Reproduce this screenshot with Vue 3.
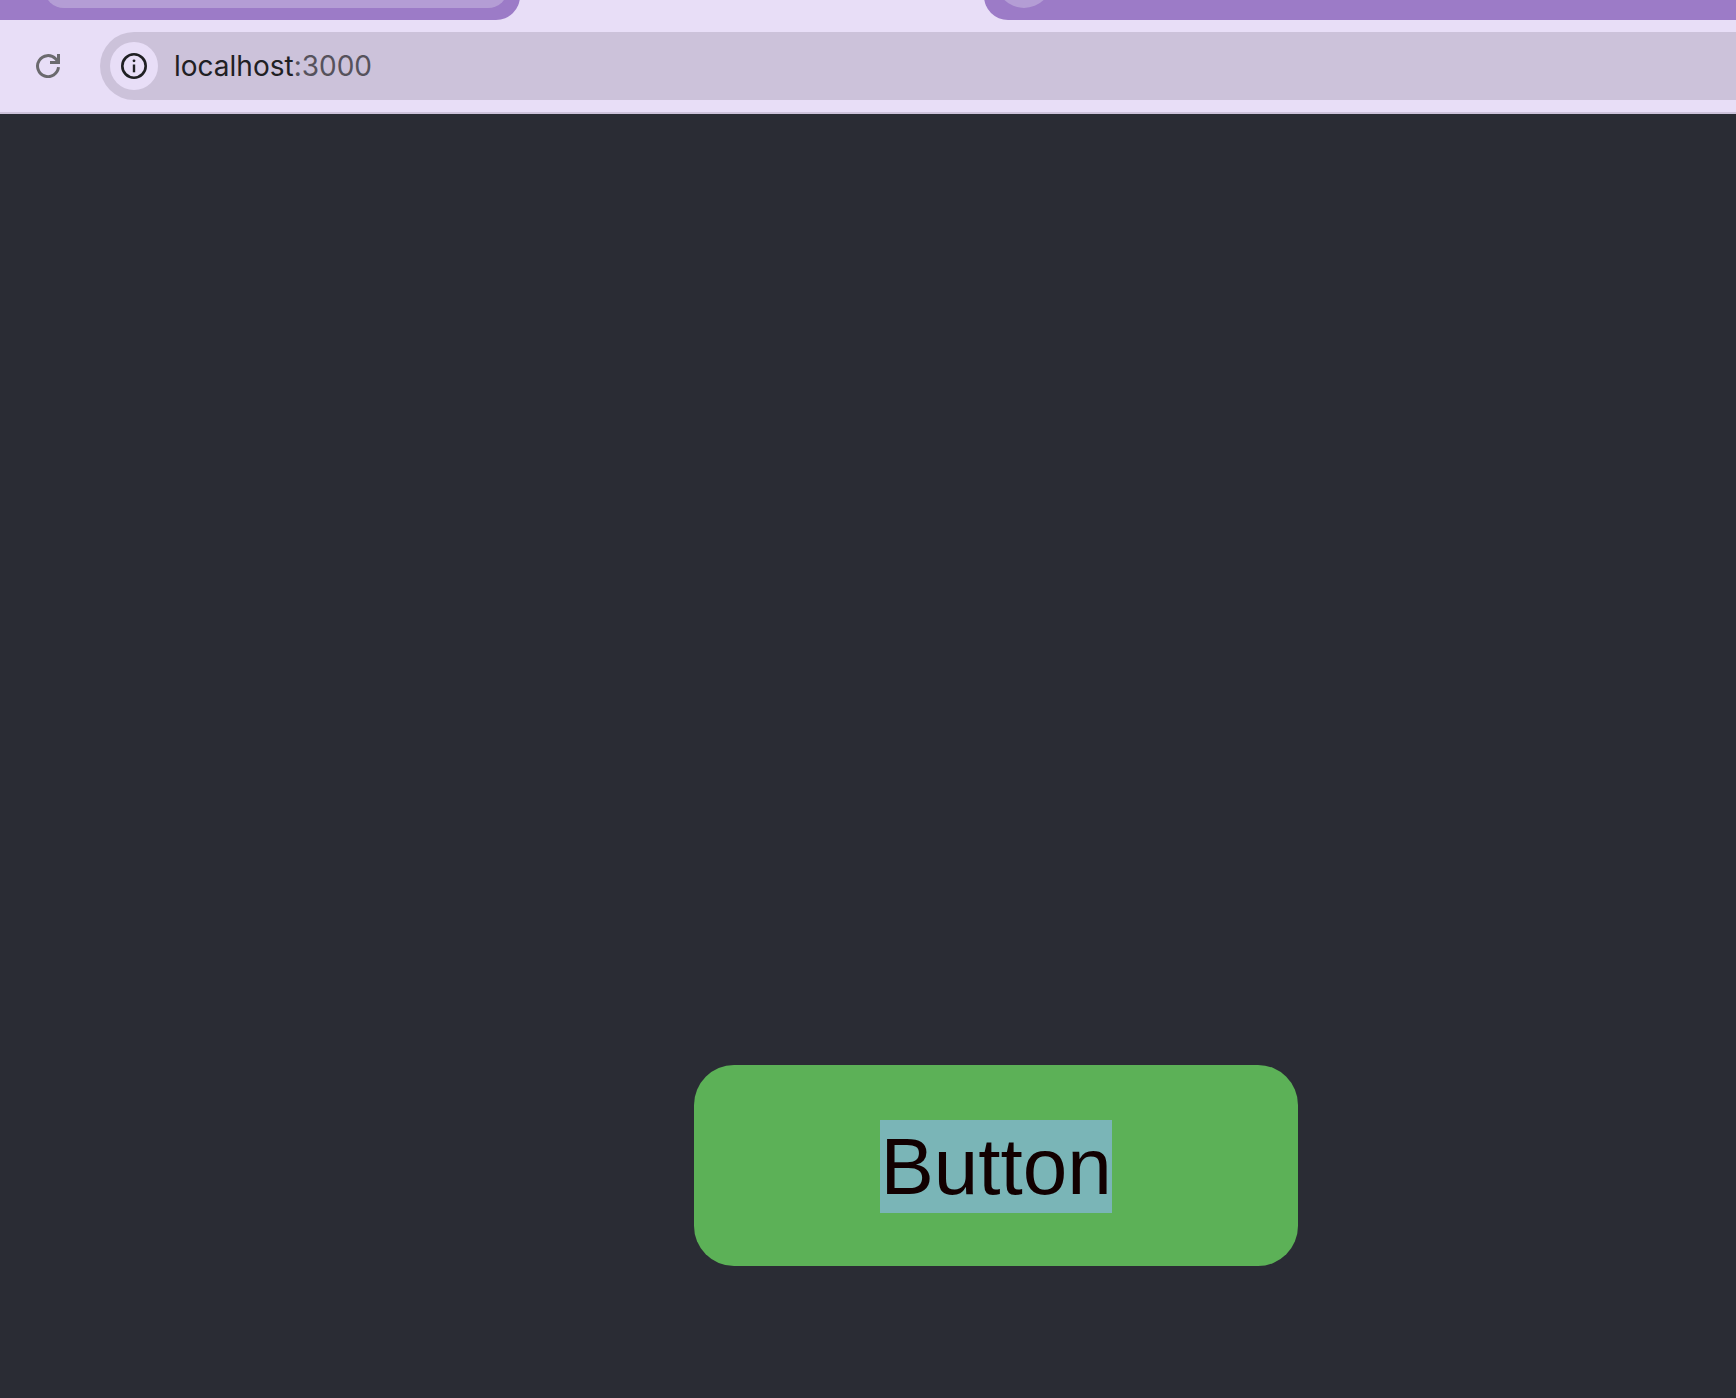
<script setup>
import { ref } from 'vue'

const host = ref('localhost')
const port = ref(':3000')
</script>

<template>
  <div class="browser">
    <header class="chrome">
      <div class="tab-strip">
        <div class="tabs-before"><span class="hovered-tab"></span></div>
        <div class="tabs-after"><span class="new-tab"></span></div>
      </div>
      <div class="toolbar">
        <button class="reload" type="button" aria-label="Reload">
          <svg width="24" height="24" viewBox="0 0 24 24" fill="none" stroke="#6b6a6e" stroke-width="3">
            <path d="M22.5 13.2A10.5 10.5 0 1 1 19.6 4.8L22.4 8" />
            <path d="M22.5 0V8.5H14" />
          </svg>
        </button>
        <div class="omnibox">
          <button class="site-info" type="button" aria-label="View site information">
            <svg width="26" height="26" viewBox="0 0 26 26" fill="none">
              <circle cx="13" cy="13" r="11.7" stroke="#1f2023" stroke-width="2.6" />
              <path d="M13 11.5V19.3" stroke="#1f2023" stroke-width="2.4" />
              <circle cx="13" cy="7.8" r="1.4" fill="#1f2023" />
            </svg>
          </button>
          <a class="address" href="#">{{ host }}<span class="port">{{ port }}</span></a>
        </div>
      </div>
    </header>
    <main class="page">
      <button class="action" type="button"><span class="selected">Button</span></button>
    </main>
  </div>
</template>

<style>
body {
  margin: 0;
  background: #2a2c34;
}
</style>

<style scoped>
.browser {
  display: flex;
  flex-direction: column;
  min-height: 100vh;
}

button {
  margin: 0;
  padding: 0;
  border: 0;
  background: none;
}

.chrome {
  background: #e8def7;
  border-bottom: 2px solid #ccc2da;
}

.tab-strip {
  display: flex;
  height: 20px;
  gap: 464px;
  overflow: hidden;
}

.tabs-before,
.tabs-after {
  box-sizing: border-box;
  display: flex;
  align-items: flex-end;
  align-self: flex-end;
  flex: none;
  height: 80px;
  padding-bottom: 12px;
  background: #9c7bc7;
}

.tabs-before {
  width: 520px;
  padding-left: 44px;
  padding-right: 12px;
  border-bottom-right-radius: 24px;
}

.tabs-after {
  flex: 1;
  padding-left: 12px;
  border-bottom-left-radius: 24px;
}

.hovered-tab {
  flex: 1;
  height: 56px;
  border-radius: 20px;
  background: #b49dd5;
}

.new-tab {
  width: 56px;
  height: 56px;
  border-radius: 50%;
  background: #b49dd5;
}

.toolbar {
  display: flex;
  align-items: center;
  gap: 28px;
  padding: 12px 0 12px 24px;
}

.reload {
  display: grid;
  place-items: center;
  width: 48px;
  height: 48px;
}

.omnibox {
  box-sizing: border-box;
  display: flex;
  flex: 1;
  align-items: center;
  gap: 16px;
  height: 68px;
  padding-left: 10px;
  border-radius: 34px 0 0 34px;
  background: #ccc2da;
}

.site-info {
  display: grid;
  place-items: center;
  width: 48px;
  height: 48px;
  border-radius: 50%;
  background: #e8def7;
}

.address {
  color: #1f2023;
  font: 28px/32px Inter, sans-serif;
  text-decoration: none;
}

.port {
  color: #56525c;
}

.page {
  flex: 1;
  padding: 951px 0 132px 40%;
}

.action {
  display: block;
  padding: 55px 186px 53px;
  border-radius: 40px;
  background: #5cb157;
  color: #120000;
  font: 80px/93px "Liberation Sans", Arial, sans-serif;
}

.selected {
  display: block;
  background: #7ab5b7;
}
</style>
